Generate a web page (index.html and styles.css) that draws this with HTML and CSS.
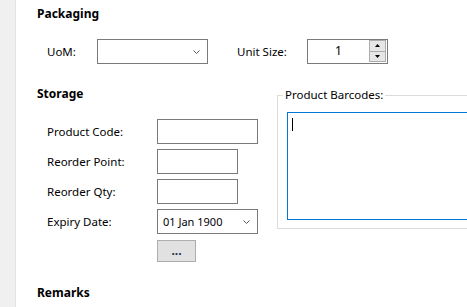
FILE: index.html
```html
<!DOCTYPE html>
<html lang="en">
<head>
    <meta charset="UTF-8">
    <title>Product Details</title>
    <link rel="stylesheet" href="styles.css">
</head>
<body>
    <div class="window">
        <div class="gutter"></div>
        <main class="form">
            <h2 class="section-title">Packaging</h2>
            <div class="packaging-row">
                <label class="field-label uom-label">UoM:</label>
                <div class="combo uom-combo">
                    <span class="combo-value"></span>
                    <svg class="chevron" width="7" height="4" viewBox="0 0 7 4"><path d="M0.5 0.5 L3.5 3.5 L6.5 0.5" fill="none" stroke="#5a5a5a" stroke-width="1"/></svg>
                </div>
                <label class="field-label unit-label">Unit Size:</label>
                <div class="spin">
                    <span class="spin-value">1</span>
                    <div class="spin-buttons">
                        <span class="spin-btn"><svg width="5" height="3" viewBox="0 0 5 3"><path d="M2.5 0 L5 3 L0 3 Z" fill="#000"/></svg></span>
                        <span class="spin-btn"><svg width="5" height="3" viewBox="0 0 5 3"><path d="M0 0 L5 0 L2.5 3 Z" fill="#000"/></svg></span>
                    </div>
                </div>
            </div>

            <section class="storage">
                <div class="storage-fields">
                    <h2 class="section-title">Storage</h2>
                    <div class="field-row">
                        <label class="field-label">Product Code:</label>
                        <div class="textbox wide"></div>
                    </div>
                    <div class="field-row">
                        <label class="field-label">Reorder Point:</label>
                        <div class="textbox"></div>
                    </div>
                    <div class="field-row">
                        <label class="field-label">Reorder Qty:</label>
                        <div class="textbox"></div>
                    </div>
                    <div class="field-row">
                        <label class="field-label">Expiry Date:</label>
                        <div class="combo date-combo">
                            <span class="combo-value">01 Jan 1900</span>
                            <svg class="chevron" width="7" height="4" viewBox="0 0 7 4"><path d="M0.5 0.5 L3.5 3.5 L6.5 0.5" fill="none" stroke="#5a5a5a" stroke-width="1"/></svg>
                        </div>
                    </div>
                    <div class="button-row">
                        <button class="dots-btn" type="button">...</button>
                    </div>
                </div>
                <fieldset class="barcodes">
                    <legend>Product Barcodes:</legend>
                    <div class="barcode-box"><span class="caret"></span></div>
                </fieldset>
            </section>

            <h2 class="section-title remarks">Remarks</h2>
        </main>
    </div>
</body>
</html>
```

FILE: styles.css
```css
html, body {
    margin: 0;
    height: 307px;
    overflow: hidden;
    background: #ffffff;
}
body {
    font-family: "Noto Sans", "Open Sans", sans-serif;
    font-size: 11.5px;
    color: #000;
}
.window {
    display: flex;
    height: 100%;
}
.gutter {
    width: 15px;
    flex: none;
    background-color: #f0f0f0;
    border-right: 1px solid #e3e3e3;
}
.form {
    flex: 1;
    padding: 6px 0 0 21px;
    min-width: 0;
    overflow: hidden;
}
.section-title {
    margin: 0;
    font-size: 12px;
    font-weight: bold;
    line-height: 16px;
}
.field-label {
    line-height: 14px;
    padding-top: 1px;
}

/* packaging */
.packaging-row {
    display: flex;
    align-items: center;
    height: 25px;
    margin: 17px 0 0 10px;
}
.uom-label {
    width: 50px;
}
.unit-label {
    width: 70px;
    margin-left: 29px;
}
.combo {
    box-sizing: border-box;
    height: 25px;
    border: 1px solid #7a7a7a;
    background: #fff;
    display: flex;
    align-items: center;
    justify-content: space-between;
    padding: 0 7px 0 5px;
}
.uom-combo {
    width: 111px;
}
.chevron {
    display: block;
}
.spin {
    box-sizing: border-box;
    width: 81px;
    height: 25px;
    border: 1px solid #7a7a7a;
    display: flex;
    align-items: stretch;
    padding: 0 1px 1px 0;
}
.spin-value {
    flex: 1;
    text-align: center;
    line-height: 22px;
    font-size: 12px;
}
.spin-buttons {
    width: 17px;
    display: flex;
    flex-direction: column;
}
.spin-btn {
    flex: 1;
    box-sizing: border-box;
    background: #e6e6e6;
    border: 1px solid #adadad;
    display: flex;
    align-items: center;
    justify-content: center;
}
.spin-btn + .spin-btn {
    border-top: none;
}

/* storage */
.storage {
    display: flex;
    align-items: flex-start;
    margin-top: 22px;
}
.storage-fields {
    width: 240px;
    flex: none;
}
.storage-fields .section-title {
    margin-bottom: 17px;
}
.field-row {
    display: flex;
    align-items: center;
    height: 25px;
    margin: 0 0 5px 10px;
}
.field-row .field-label {
    width: 110px;
}
.textbox {
    box-sizing: border-box;
    width: 81px;
    height: 25px;
    border: 1px solid #7a7a7a;
    background: #fff;
}
.textbox.wide,
.date-combo {
    width: 101px;
}
.date-combo .combo-value {
    font-size: 11px;
}
.button-row {
    padding: 1px 0 0 120px;
}
.dots-btn {
    box-sizing: border-box;
    width: 39px;
    height: 22px;
    margin: 0;
    padding: 0;
    border: 1px solid #adadad;
    background: #e1e1e1;
    font-family: inherit;
    font-size: 12px;
    font-weight: bold;
    color: #1c2f50;
    line-height: 14px;
}

.barcodes {
    flex: none;
    width: 240px;
    margin: 2px 0 0 0;
    padding: 10px 0 8px 9px;
    border: 1px solid #dcdcdc;
    border-right: none;
}
.barcodes legend {
    padding: 0 2px;
    margin-left: -4px;
    line-height: 14px;
    font-size: 11.5px;
}
.barcode-box {
    box-sizing: border-box;
    height: 108px;
    border: 1px solid #0078d7;
    border-right: none;
    padding: 5px 0 0 4px;
}
.caret {
    display: block;
    width: 1px;
    height: 13px;
    background: #000;
}

.remarks {
    margin-top: 23px;
}
```
